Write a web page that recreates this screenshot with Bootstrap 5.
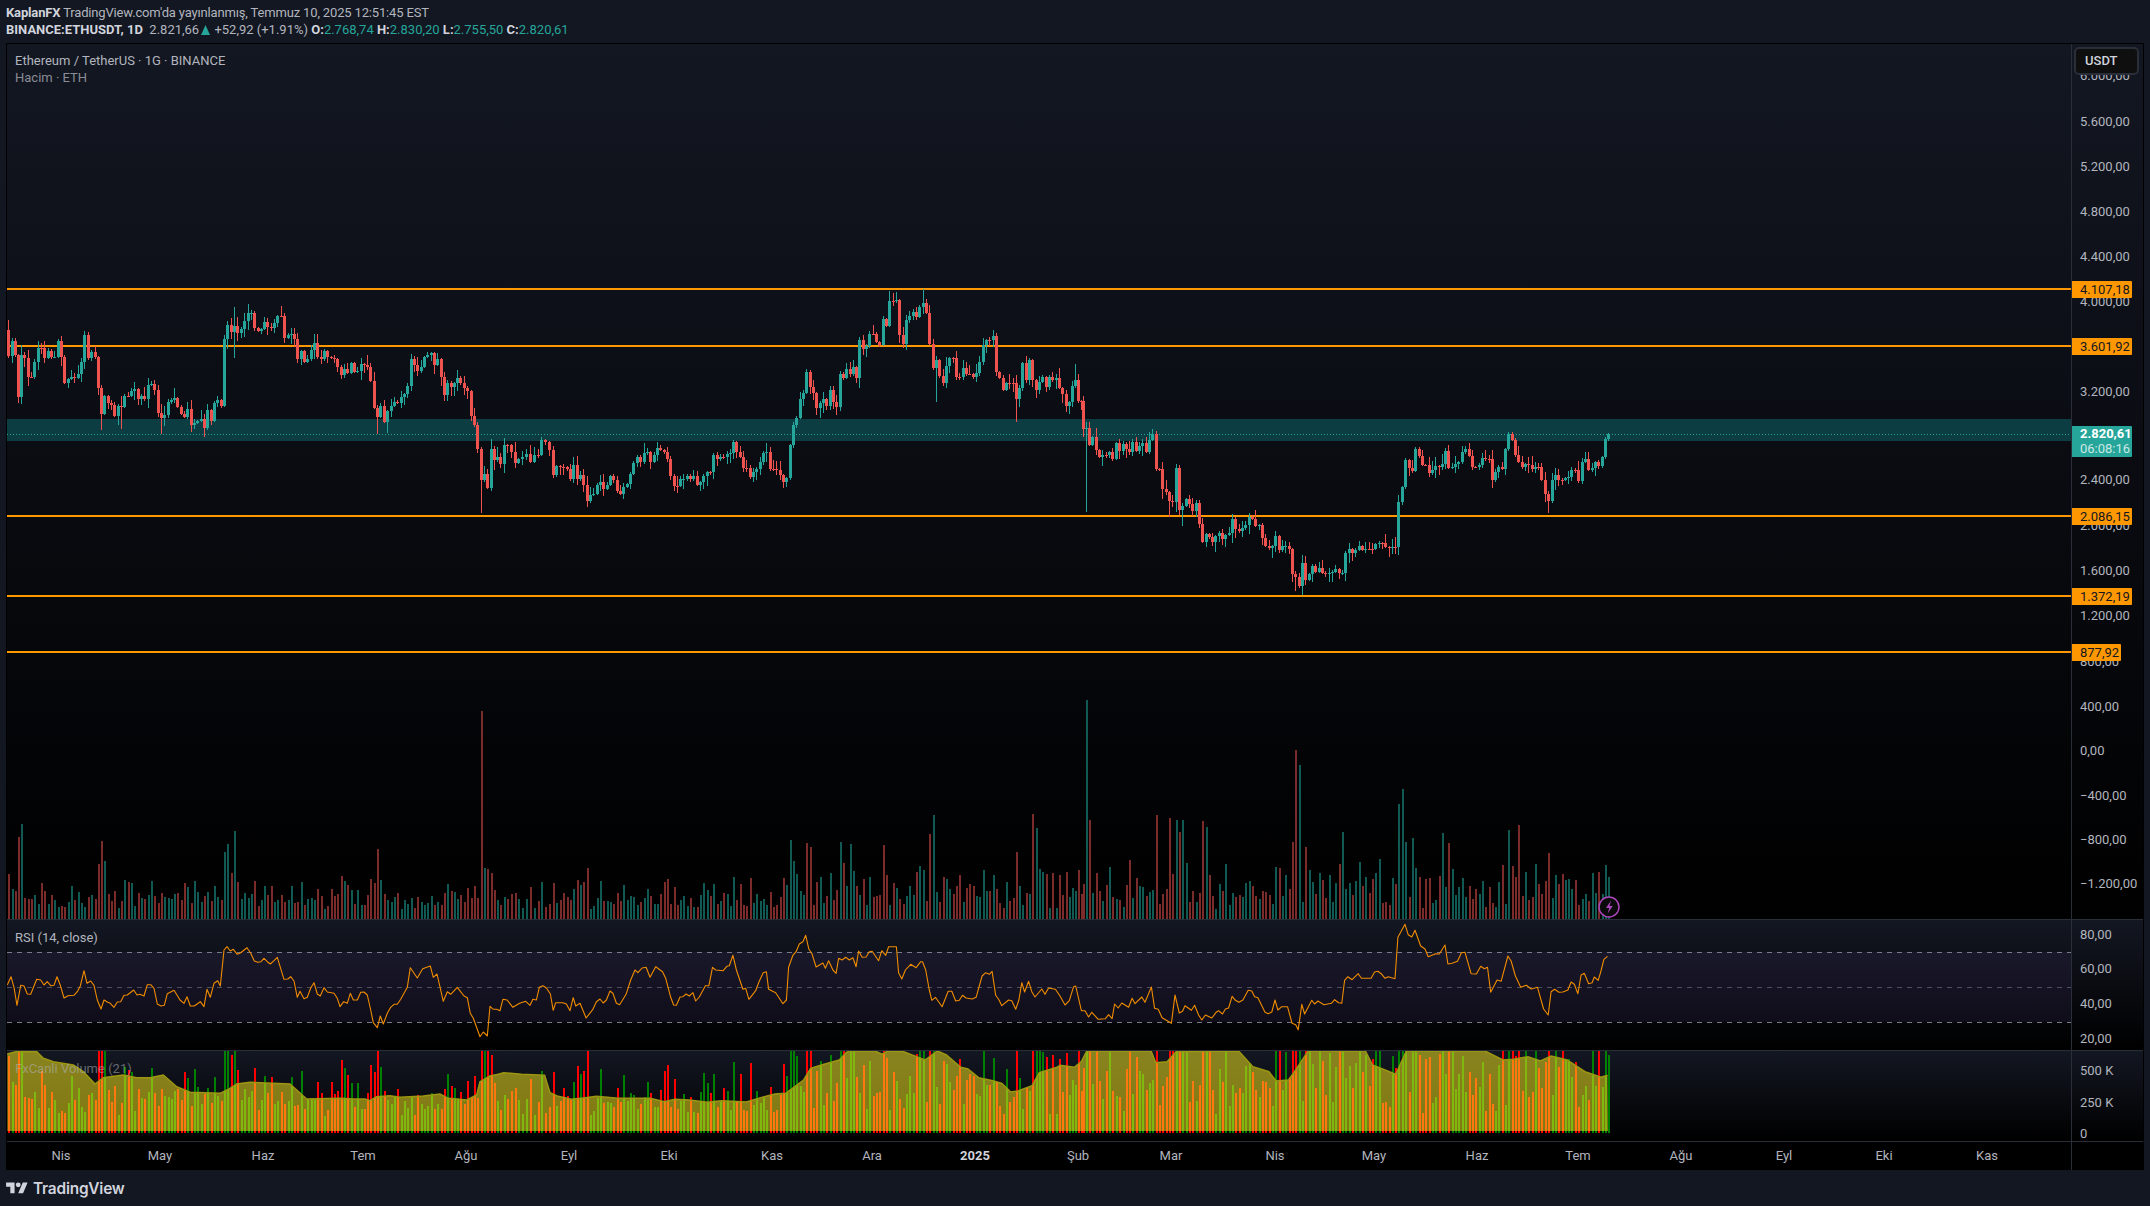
<!DOCTYPE html>
<html lang="tr">
<head>
<meta charset="utf-8">
<title>ETHUSDT</title>
<link href="https://cdn.jsdelivr.net/npm/bootstrap@5.3.0/dist/css/bootstrap.min.css" rel="stylesheet">
<style>
html,body{height:1206px;overflow:hidden;background:#131722;}
body{font-family:Roboto,"Liberation Sans",sans-serif;font-size:13px;color:#b2b5be;line-height:17px;}
.hdr{height:43px;padding:4px 0 0 6px;white-space:nowrap;}
.hdr b{font-weight:700;color:#d1d4dc;}
.hdr-line{height:17px;}
.hdr-one{letter-spacing:-.16px;}
.up-val{color:#26a69a;}
.tri-mark{display:inline-block;vertical-align:-1px;margin:0 1.5px;}
.frame-box{margin-left:6px;width:2138px;height:1127px;border-top:1px solid #000;border-left:1px solid #000;border-right:1px solid #000;background:#000;}
.pane-row{display:flex;border-bottom:1px solid #2a2e39;background:linear-gradient(#131722,#000);}
.pane-main{height:876px;}
.pane-rsi{height:131px;}
.pane-vol{height:91px;}
.pane-time{height:28px;background:#000;border-bottom:0;}
.plot-area{width:2064px;position:relative;flex:none;}
.plot-area svg{display:block;position:absolute;left:0;top:0;}
.axis-col{width:72px;flex:none;border-left:1px solid #2a2e39;position:relative;}
.tick-lbl{position:absolute;left:8px;transform:translateY(-50%);white-space:nowrap;color:#b2b5be;}
.time-lbl{position:absolute;top:5px;transform:translateX(-50%);color:#b2b5be;}
.time-strong{font-weight:700;color:#d1d4dc;}
.price-tag{position:absolute;left:0;width:60px;height:17px;margin-top:-8.5px;padding-left:8px;background:#ff9800;color:#131722;z-index:2;border-radius:0 1px 1px 0;}
.price-now{position:absolute;left:0;top:382px;width:60px;height:31px;padding:0 0 0 8px;background:#26a69a;color:#fff;z-index:2;line-height:15px;border-radius:0 1px 1px 0;}
.price-now strong{display:block;font-weight:700;}
.price-now span{display:block;opacity:.75;}
.unit-btn{position:absolute;left:2px;top:3px;width:65px;height:28px;background:#0f0f0f;border:2px solid #2a2e39;border-radius:5px;color:#d1d4dc;font-weight:500;padding:3px 0 0 9px;z-index:3;}
.pane-note{position:absolute;left:8px;white-space:nowrap;z-index:2;}
.note-main{top:8px;color:#b2b5be;}
.note-sub{top:25px;color:#8a8d96;}
.note-rsi{top:9px;color:#b2b5be;}
.note-vol{top:9px;color:rgba(178,181,190,.55);}
.foot-bar{height:36px;padding-left:6px;}
.foot-word{font-family:Inter,Roboto,sans-serif;font-weight:600;font-size:15.4px;color:#d1d4dc;letter-spacing:-.2px;margin-left:5px;}
</style>
</head>
<body class="m-0">
<div class="hdr">
  <div class="hdr-line hdr-one"><b>KaplanFX</b> TradingView.com'da yayınlanmış, Temmuz 10, 2025 12:51:45 EST</div>
  <div class="hdr-line"><b>BINANCE:ETHUSDT, 1D</b>&nbsp; 2.821,66<svg class="tri-mark" width="9" height="10" viewBox="0 0 9 10" aria-hidden="true"><path fill="#26a69a" d="M4.5 0L9 10H0z"/></svg> +52,92 (+1.91%) <b>O:</b><span class="up-val">2.768,74</span> <b>H:</b><span class="up-val">2.830,20</span> <b>L:</b><span class="up-val">2.755,50</span> <b>C:</b><span class="up-val">2.820,61</span></div>
</div>
<div class="frame-box d-flex flex-column">
  <div class="pane-row pane-main">
    <div class="plot-area">
      <svg id="svgMain" width="2064" height="875" viewBox="7 44 2064 875"></svg>
      <div class="pane-note note-main">Ethereum / TetherUS · 1G · BINANCE</div>
      <div class="pane-note note-sub">Hacim · ETH</div>
    </div>
    <div class="axis-col" id="axisMain">
      <div class="unit-btn">USDT</div>
      <div class="price-now"><strong>2.820,61</strong><span>06:08:16</span></div>
    </div>
  </div>
  <div class="pane-row pane-rsi">
    <div class="plot-area">
      <svg id="svgRsi" width="2064" height="130" viewBox="7 920 2064 130"></svg>
      <div class="pane-note note-rsi">RSI (14, close)</div>
    </div>
    <div class="axis-col" id="axisRsi"></div>
  </div>
  <div class="pane-row pane-vol">
    <div class="plot-area">
      <svg id="svgVol" width="2064" height="90" viewBox="7 1051 2064 90"></svg>
      <div class="pane-note note-vol">FxCanli Volume (21)</div>
    </div>
    <div class="axis-col" id="axisVol"></div>
  </div>
  <div class="pane-row pane-time">
    <div class="plot-area" id="timeAxis"></div>
    <div class="axis-col"></div>
  </div>
</div>
<div class="foot-bar d-flex align-items-center">
  <svg width="22" height="17" viewBox="0 0 36 28" aria-hidden="true"><path fill="#d1d4dc" d="M14 22H7V11H0V4h14v18zM28 22h-8l7.5-18h8L28 22z"/><circle fill="#d1d4dc" cx="20" cy="8" r="4"/></svg>
  <span class="foot-word">TradingView</span>
</div>
<script>
function parse(s,ox,sx,oy,sy){return s.trim().split(/\s+/).map(function(p){var a=p.split(':');return [ox+(+a[0])/sx,oy+(+a[1])/sy];});}
var rngS=12345;function rnd(){rngS|=0;rngS=rngS+0x6D2B79F5|0;var t=Math.imul(rngS^rngS>>>15,1|rngS);t=t+Math.imul(t^t>>>7,61|t)^t;return((t^t>>>14)>>>0)/4294967296;}
var closeA="25:228 35:183 44:226 52:350 64:225 73:235 83:290 93:290 103:247 112:203 123:203 133:234 143:213 154:232 163:230 172:183 184:232 193:308 202:297 213:291 222:293 232:282 245:246 254:165 262:234 274:216 284:232 293:323 304:401 314:348 322:368 334:374 343:407 353:378 363:380 373:348 382:348 394:333 403:328 412:357 424:348 434:358 442:316 455:313 463:330 472:398 484:413 493:406 502:366 514:360 523:354 532:381 541:401 553:410 562:388 571:434 583:430 592:423 602:418 613:444 622:390 631:423 643:370 653:361 661:377 673:178 682:136 691:155 703:138 712:159 722:148 733:123 743:99 752:98 763:145 773:153 782:148 793:127 802:140 812:143 823:130 833:108 841:108 853:174 863:165 872:162 883:178 893:237 902:213 912:246 922:238 932:209 943:189 952:230 961:238 972:213 982:232 992:234 1003:237 1012:262 1022:285 1033:268 1043:278 1052:250 1060:276 1072:274 1082:252 1092:255 1102:260 1112:302 1120:383 1132:410 1141:378 1150:425 1162:393 1172:378 1181:366 1193:368 1202:352 1212:343 1222:318 1232:237 1242:254 1253:273 1262:260 1271:232 1282:225 1291:220 1301:255 1312:237 1322:290 1331:345 1342:308 1352:321 1361:308 1372:294 1382:310 1391:323 1402:333 1411:408 1420:435 1432:506 1442:600 1452:583 1462:624 1472:506 1481:540 1492:531 1501:552 1510:495 1522:495 1531:515 1541:548 1552:537";
var closeB="8:530 18:522 28:545 37:525 46:525 57:481 72:487 85:510 94:585 102:558 112:562 122:562 130:566 141:597 150:555 158:597 170:585 178:615 186:663 197:645 205:642 214:615 224:606 233:627 242:615 253:588 262:600 270:633 280:642 289:622 298:612 309:582 318:548 327:531 337:545 346:519 356:517 365:546 374:525 382:504 394:510 402:515 410:537 421:588 430:618 439:618 449:598 458:597 467:588 476:597 485:588 494:615 502:606 513:588 522:576 532:576 542:525 550:538 562:532 570:532 578:522 587:520 597:486 606:516 615:531 625:564 634:564 642:591 654:575 662:567 670:546 682:520 690:516 698:567 708:567 718:570 726:585 738:606 746:595 754:495 766:435 774:415 782:358 794:339 802:276 810:320 822:338 830:384 838:369 850:358 858:378 866:330 878:366 886:381 894:282 906:294 914:267 922:282 934:262 942:294 950:180 958:207 968:198 978:162 988:162 997:185 1006:194 1015:117 1026:138 1034:63 1044:63 1054:60 1062:165 1071:192 1082:120 1091:108 1099:97 1110:110 1118:80 1127:69 1138:100 1147:192 1155:264 1166:240 1174:288 1183:309 1192:258 1202:234 1212:234 1222:291 1230:291 1239:264 1250:282 1258:282 1267:291 1278:279 1286:247 1294:194 1306:180 1315:180 1324:168 1334:276 1342:294 1351:330 1361:309 1370:309 1378:309 1390:357 1398:324 1407:249 1415:300 1426:240 1435:300 1443:330 1454:306 1463:291 1472:321 1482:291 1490:300 1500:294 1510:324 1519:342 1528:378 1538:366 1547:318 1556:300 1565:363";
var closeC="27:183 35:266 44:263 55:315 63:291 73:330 84:351 92:345 100:345 112:336 122:357 130:309 141:333 150:312 158:327 170:336 178:306 186:333 198:318 206:309 215:336 226:300 234:282 243:387 255:387 263:447 272:456 283:482 292:486 300:384 312:510 320:498 330:477 340:492 350:513 358:489 366:552 378:606 386:582 395:590 406:606 414:588 423:578 434:596 444:584 452:580 463:537 471:568 480:573 491:565 500:555 509:530 519:536 528:558 537:556 549:594 557:618 566:624 577:618 586:588 594:630 605:619 614:618 622:627 634:702 642:710 651:738 663:669 671:720 680:702 691:678 699:696 708:684 719:698 727:700 736:698 748:696 756:686 765:700 777:698 785:640 794:628 805:640 813:630 822:618 831:630 842:626 851:626 860:626 871:612 880:610 887:610 898:622 908:622 917:620 928:620 936:486 945:441 956:360 965:385 973:393 985:327 993:348 1002:374 1014:376 1022:399 1030:391 1042:378 1050:380 1059:372 1070:333 1079:384 1087:380 1098:372 1107:367 1116:336 1127:327 1136:347 1145:380 1156:380 1164:376 1173:354 1184:357 1193:357 1201:420 1213:396 1222:381 1229:388 1241:327 1250:282 1258:300 1269:345 1278:365 1287:381 1298:372 1306:376 1315:387 1323:381 1335:381 1344:420 1352:462 1364:484 1372:420 1381:405 1392:420 1401:420 1410:415 1420:411 1429:390 1438:390 1449:424 1458:366 1466:357 1478:390 1487:384 1495:366 1506:378 1515:351 1524:297 1534:282";
var pts=parse(closeA,0,3,280,3).concat(parse(closeB,520,2.8,280,3),parse(closeC,1070,2.85,340,3));
var candles=[],prev=330;
pts.forEach(function(p){candles.push({x:p[0],o:prev,c:p[1]});prev=p[1];});
candles.forEach(function(k,i){var hw=Math.min(4,i,candles.length-1-i),s=0,n=0;for(var j=i-hw;j<=i+hw;j++){s+=candles[j].x;n++;}k.sx=Math.round(s/n);});
var wickOv=[[480,null,513],[1085,null,512],[234,307,358],[1016,null,422],[922,289,null],[936,null,402],[1302,null,595],[1295,null,591],[1549,null,513],[161,null,434],[101,null,430],[377,null,434],[387,null,433],[121,null,429],[247,304,null],[889,291,null],[1182,null,526],[1170,null,517],[1075,364,null]];
candles.forEach(function(k){
 var a=rnd(),b=rnd();
 k.h=Math.min(k.o,k.c)-1-a*a*9;
 k.l=Math.max(k.o,k.c)+1+b*b*9;
 k.up=k.c<k.o;
});
function nearest(x){var b=0,d=1e9;candles.forEach(function(k,i){var e=Math.abs(k.x-x);if(e<d){d=e;b=i;}});return candles[b];}
wickOv.forEach(function(w){var k=nearest(w[0]);if(w[1]!==null)k.h=w[1];if(w[2]!==null)k.l=w[2];});
var lastC=candles[candles.length-1];lastC.h=lastC.c-1;lastC.l=lastC.o+2;
// volumes
candles.forEach(function(k){var r=rnd();k.v=k.x<800?10+r*r*24+rnd()*10:10+r*r*38+rnd()*14;});
var volA=[[16,45],[38,95,1],[32,82,0],[196,78,0],[190,55,0],[204,58,1],[437,67,1],[445,75,1],[457,88,1],[451,46,0],[737,70,0],[730,36,0],[940,208,0],[947,51,1],[952,50,0],[960,46,0],[666,43,0],[1149,51,0],[1546,79,1],[1552,58,1],[1559,45,1],[1310,40,0],[1467,41,0]];
volA.forEach(function(v){var k=nearest(v[0]/1.96);k.v=v[1];if(v[2]!==undefined)k.vup=v[2];});
var volB=[[545,219,1],[551,99,0],[447,105,0],[453,91,1],[256,104,1],[250,85,0],[683,104,0],[703,101,0],[716,99,1],[723,87,0],[730,99,1],[767,98,0],[774,92,1],[946,169,0],[957,154,1],[1143,115,1],[1149,130,1],[1167,84,0],[1173,81,1],[1154,77,1],[1225,86,1],[1238,76,0],[1353,89,1],[1373,94,0],[1428,66,0],[1039,87,1],[938,77,0],[965,72,0],[411,67,0],[73,77,1],[10,79,1],[15,76,0],[21,72,0],[155,76,1],[161,74,0],[98,75,1],[1537,54,1],[1543,42,1]];
volB.forEach(function(v){var k=nearest(800+v[0]/1.912);k.v=v[1];k.vup=v[2];});

var SVGNS='http://www.w3.org/2000/svg';
function el(svg,n,at){var e=document.createElementNS(SVGNS,n);for(var a in at)e.setAttribute(a,at[a]);svg.appendChild(e);return e;}
var sm=document.getElementById('svgMain');
el(sm,'rect',{x:7,y:419,width:2064,height:22,fill:'#0c3d42'});
el(sm,'line',{x1:7,x2:2071,y1:434.5,y2:434.5,stroke:'#26a69a','stroke-width':1,'stroke-dasharray':'1 2'});
[289,346,516,596,652].forEach(function(y){el(sm,'rect',{x:7,y:y-1,width:2064,height:2,fill:'#ff9800'});});
var wick='',bodyU='',bodyD='',wickD='';
candles.forEach(function(k){
 var X=k.sx;
 var t=Math.round(Math.min(k.o,k.c)),b=Math.round(Math.max(k.o,k.c));if(b-t<1)b=t+1;
 var w='M'+X+'.5 '+Math.round(k.h)+'V'+Math.round(k.l);
 var bd='M'+(X-1)+' '+t+'h3V'+b+'h-3z';
 if(k.up){wick+=w;bodyU+=bd;}else{wickD+=w;bodyD+=bd;}
});
el(sm,'path',{d:wick,stroke:'#26a69a','stroke-width':1,fill:'none'});
el(sm,'path',{d:wickD,stroke:'#ef5350','stroke-width':1,fill:'none'});
el(sm,'path',{d:bodyU,fill:'#26a69a'});
el(sm,'path',{d:bodyD,fill:'#ef5350'});
// volume
var vu='',vd='';
candles.forEach(function(k){var up=k.vup===undefined?k.up:!!k.vup;k.vu=up;var d='M'+k.sx+' '+(919-Math.round(k.v))+'h2V919h-2z';if(up)vu+=d;else vd+=d;});
el(sm,'path',{d:vu,fill:'#115a53'});
el(sm,'path',{d:vd,fill:'#7c2b2b'});
el(sm,'circle',{cx:1609,cy:907,r:10,fill:'#0a0a0a',stroke:'#ab47bc','stroke-width':1.5});
el(sm,'path',{d:'M1611 900.5l-5 7.5h3.2l-1.5 5.5 5-7.5h-3.2z',fill:'#ab47bc'});
// rsi
var rs=document.getElementById('svgRsi');
el(rs,'rect',{x:7,y:952,width:2064,height:70,fill:'rgba(126,87,194,.1)'});
[[952.5,'#787b86'],[987.5,'rgba(120,123,134,.6)'],[1022.5,'#787b86']].forEach(function(b){el(rs,'line',{x1:7,x2:2071,y1:b[0],y2:b[0],stroke:b[1],'stroke-width':1,'stroke-dasharray':'5 5'});});
var rA="22:255 33:230 42:262 51:316 62:256 72:258 82:282 92:283 110:238 122:240 132:255 142:245 152:257 162:256 171:230 181:256 192:294 204:287 222:286 232:275 241:258 252:212 261:250 272:243 282:256 292:300 303:327 312:300 322:306 331:310 342:322 352:306 362:305 372:286 382:285 401:270 411:285 420:283 432:288 442:254 452:254 462:265 472:312 483:318 493:316 502:281 522:271 531:285 540:300 552:310 561:290 571:318 583:318 601:305 612:320 621:268 631:292 642:250 653:242 661:258 672:150 681:140 691:153 700:148 712:163 722:158 741:143 752:160 763:183 773:187 783:185 792:175 802:185 811:192 822:182 832:172 852:238 863:237 872:230 882:243 892:292 900:274 912:296 922:292 932:264 942:248 952:282 961:288 972:263 982:276 1002:280 1012:295 1020:320 1031:305 1042:310 1051:280 1060:300 1072:300 1082:277 1092:276 1102:285 1112:330 1120:368 1132:383 1141:348 1150:372 1162:340 1172:322 1182:313 1192:313 1202:298 1222:262 1231:203 1252:234 1268:206 1291:198 1300:232 1311:222 1330:304 1342:275 1352:283 1372:262 1392:288 1402:293 1411:340 1420:355 1440:410 1450:396 1462:408 1470:319 1480:328 1490:328";
var rB="0:272 8:238 20:240 36:262 55:250 72:244 84:256 92:238 102:240 110:202 120:197 130:204 141:222 149:271 156:248 176:248 186:252 196:272 205:233 212:258 224:250 241:294 260:268 270:245 280:237 289:249 298:240 308:213 316:220 326:250 335:254 353:223 366:180 378:150 386:158 398:144 409:142 420:172 436:140 455:155 464:175 478:232 486:255 494:256 504:231 512:230 521:222 530:228 540:218 548:243 558:231 575:197 585:197 595:142 604:150 625:152 635:139 642:137 652:106 662:150 680:208 688:205 697:238 716:212 725:186 737:158 746:155 752:208 772:218 792:251 802:240 808:142 820:106 829:95 838:72 848:65 856:46 865:88 873:100 885:141 904:129 911:145 920:122 932:150 941:160 948:115 958:120 968:112 978:120 988:113 997:140 1004:93 1014:112 1025:111 1034:95 1042:94 1060:122 1069:92 1080:106 1088:80 1110:80 1116:158 1125:177 1135:150 1150:133 1165:143 1178:125 1183:125 1192:150 1202:210 1209:241 1219:232 1238:260 1255:214 1265:214 1276:243 1286:241 1295:226 1305:234 1322:237 1333:232 1350:168 1360:158 1370:163 1378:154 1388:226 1397:239 1405:257 1424:240 1433:242 1444:268 1453:240 1461:188 1469:216 1480:184 1489:215 1498:231 1517:207 1526:223 1536:204 1555:208";
var rC="0:228 14:255 26:242 38:200 44:198 60:272 70:272 80:291 89:277 107:298 127:296 136:284 146:296 153:252 163:264 173:249 192:262 202:235 210:251 229:231 238:247 256:201 265:265 275:268 286:293 312:310 322:225 334:279 343:274 350:257 368:271 377:256 388:285 397:300 407:285 425:294 437:277 444:272 455:282 463:267 472:264 482:229 491:241 501:247 512:240 527:211 537:213 545:230 554:233 574:277 583:281 593:276 602:240 610:270 621:260 637:260 650:310 660:314 667:329 677:253 685:282 705:241 713:252 722:243 739:254 760:250 769:239 780:248 789:250 797:181 806:170 818:179 835:161 844:175 871:175 881:156 890:154 901:163 910:175 919:170 938:176 946:52 966:13 975:44 985:51 994:31 1010:78 1022:87 1031:110 1052:101 1062:102 1078:75 1086:132 1098:130 1113:124 1124:98 1134:97 1151:161 1166:162 1178:139 1188:146 1197:142 1206:217 1224:180 1235:184 1254:108 1263:123 1275:168 1290:202 1306:196 1319:207 1337:202 1354:267 1367:285 1375:215 1385:208 1397:217 1408:216 1422:210 1431:186 1440:193 1450:221 1459:165 1468:160 1480:191 1490:188 1496:171 1507:181 1514:156 1523:118 1533:109";
var rp=parse(rA,0,3,900,3).concat(parse(rB,500,2.8,920,3),parse(rC,1060,2.8,920,3));
el(rs,'polyline',{points:rp.map(function(p){return p[0].toFixed(1)+','+p[1].toFixed(1);}).join(' '),fill:'none',stroke:'#f08c00','stroke-width':1.1,'stroke-linejoin':'round'});
// volume indicator
var vs=document.getElementById('svgVol');
var red='',grn='';
candles.forEach(function(k){var h=Math.min(82,Math.round(k.v*(k.x>1080?1.85:1.7)));var d='M'+k.sx+' '+(1133-h)+'h2V1133h-2z';if(k.vu)grn+=d;else red+=d;});
el(vs,'path',{d:red,fill:'#ff0000'});
el(vs,'path',{d:grn,fill:'#008000'});
var aA="22:462 48:455 110:455 130:475 160:485 220:495 250:515 285:552 310:533 370:525 410:533 450:533 490:525 530:560 570:577 660:580 690:565 710:552 750:547 870:552 890:570 920:597 1020:595 1060:597 1095:597 1110:602 1130:590 1170:587 1200:592 1270:588 1320:582 1345:595 1400:600 1430:585 1440:545 1470:528 1495:523";
var aB="10:458 60:463 125:466 140:518 160:528 200:538 240:533 270:529 330:535 420:535 460:545 490:538 530:540 580:547 620:542 690:546 740:530 770:522 800:520 850:480 870:445 900:435 950:420 970:397 980:393 1050:393 1070:403 1085:393 1130:395 1190:420 1225:393 1250:405 1290:442 1310:447 1340:473 1380:482 1405:490 1430:516 1450:513 1490:497 1510:458 1560:442";
var aC="0:436 40:442 60:425 75:393 200:393 255:393 268:428 300:425 325:395 500:393 540:440 585:455 605:483 640:480 660:450 695:393 855:393 875:435 940:463 970:393 1190:393 1240:420 1270:418 1310:410 1345:423 1375:408 1420:420 1470:455 1515:472 1533:466";
var ap=parse(aA,0,3,900,3).concat(parse(aB,500,2.8,920,3),parse(aC,1060,2.8,920,3));
var apStr=ap.map(function(p){return p[0].toFixed(1)+','+p[1].toFixed(1);}).join(' ');
el(vs,'polygon',{points:apStr+' 1608,1131 7.3,1131',fill:'rgba(255,240,30,.5)',stroke:'none'});
el(vs,'polyline',{points:apStr,fill:'none',stroke:'#9c9612','stroke-width':1.5});
// axis ticks
function tick(id,txt,y,oy){var d=document.createElement('div');d.className='tick-lbl';d.textContent=txt;d.style.top=(y-oy)+'px';document.getElementById(id).appendChild(d);}
[['6.000,00',75],['5.600,00',121],['5.200,00',166],['4.800,00',211],['4.400,00',256],['4.000,00',301],['3.200,00',391],['2.400,00',479],['2.000,00',525],['1.600,00',570],['1.200,00',615],['800,00',661],['400,00',706],['0,00',750],['−400,00',795],['−800,00',839],['−1.200,00',883]].forEach(function(t){tick('axisMain',t[0],t[1],44);});
[['80,00',934],['60,00',968],['40,00',1003],['20,00',1038]].forEach(function(t){tick('axisRsi',t[0],t[1],920);});
[['500 K',1070],['250 K',1102],['0',1133]].forEach(function(t){tick('axisVol',t[0],t[1],1051);});
[['4.107,18',289.5,60],['3.601,92',346.5,60],['2.086,15',516.5,60],['1.372,19',596.5,60],['877,92',652.5,49]].forEach(function(t){var d=document.createElement('div');d.className='price-tag';d.textContent=t[0];d.style.top=(t[1]-44)+'px';d.style.width=t[2]+'px';document.getElementById('axisMain').appendChild(d);});
[['Nis',61],['May',160],['Haz',263],['Tem',363],['Ağu',466],['Eyl',569],['Eki',669],['Kas',772],['Ara',872],['2025',975,1],['Şub',1078],['Mar',1171],['Nis',1275],['May',1374],['Haz',1477],['Tem',1578],['Ağu',1681],['Eyl',1784],['Eki',1884],['Kas',1987]].forEach(function(t){var d=document.createElement('div');d.className='time-lbl'+(t[2]?' time-strong':'');d.textContent=t[0];d.style.left=(t[1]-7)+'px';document.getElementById('timeAxis').appendChild(d);});
</script>
<script src="https://cdn.jsdelivr.net/npm/bootstrap@5.3.0/dist/js/bootstrap.bundle.min.js"></script>
</body>
</html>
